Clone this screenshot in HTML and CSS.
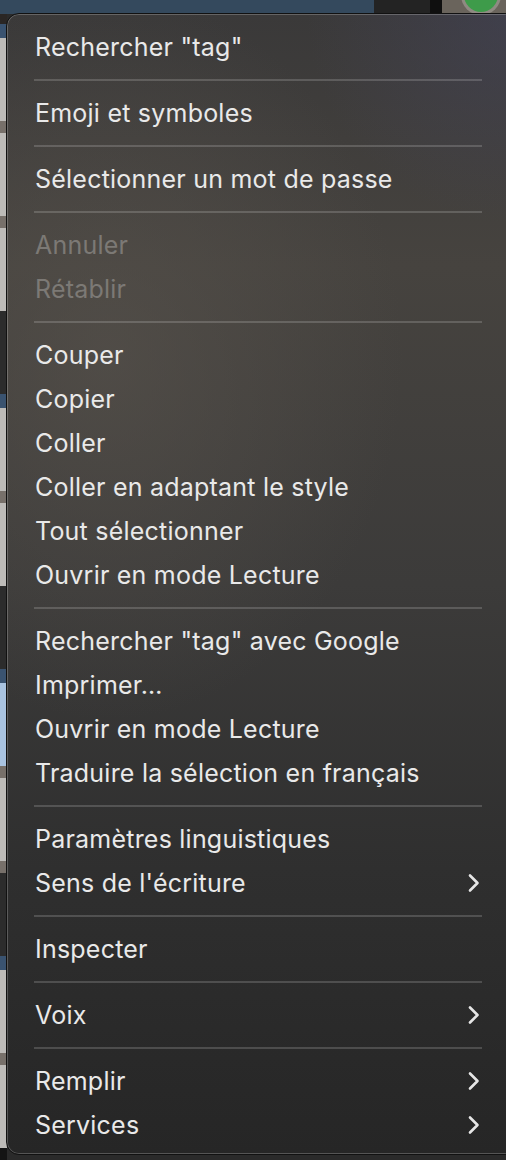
FILE: index.html
```html
<!DOCTYPE html>
<html lang="fr">
<head>
  <meta charset="UTF-8">
  <meta name="viewport" content="width=device-width, initial-scale=1.0">
  <title>Menu contextuel</title>
  <link rel="stylesheet" href="styles.css">
</head>
<body>
  <!-- what is behind the menu -->
  <div class="desk">
    <div class="topbar">
      <div class="tb-blue"></div>
      <div class="tb-dark"></div>
      <div class="tb-black"></div>
      <div class="tb-app"><span class="dot"></span></div>
    </div>
    <div class="under">
      <div class="strip">
        <div class="s-gray"></div>
        <div class="s-blue"></div>
        <div class="s-light"></div>
        <div class="s-brown"></div>
        <div class="s-light"></div>
        <div class="s-brown"></div>
        <div class="s-light"></div>
        <div class="s-dark"></div>
        <div class="s-blue"></div>
        <div class="s-light"></div>
        <div class="s-brown"></div>
        <div class="s-light"></div>
        <div class="s-dark"></div>
        <div class="s-blue"></div>
        <div class="s-pale"></div>
        <div class="s-brown"></div>
        <div class="s-light"></div>
        <div class="s-brown"></div>
        <div class="s-dark"></div>
        <div class="s-blue"></div>
        <div class="s-light"></div>
        <div class="s-brown"></div>
        <div class="s-light"></div>
        <div class="s-black"></div>
      </div>
      <div class="rest"></div>
    </div>
  </div>

  <!-- the context menu -->
  <div class="menu">
    <div class="item">Rechercher "tag"</div>
    <div class="sep"></div>
    <div class="item">Emoji et symboles</div>
    <div class="sep"></div>
    <div class="item">Sélectionner un mot de passe</div>
    <div class="sep"></div>
    <div class="item off">Annuler</div>
    <div class="item off">Rétablir</div>
    <div class="sep"></div>
    <div class="item">Couper</div>
    <div class="item">Copier</div>
    <div class="item">Coller</div>
    <div class="item">Coller en adaptant le style</div>
    <div class="item">Tout sélectionner</div>
    <div class="item">Ouvrir en mode Lecture</div>
    <div class="sep"></div>
    <div class="item">Rechercher "tag" avec Google</div>
    <div class="item">Imprimer…</div>
    <div class="item">Ouvrir en mode Lecture</div>
    <div class="item">Traduire la sélection en français</div>
    <div class="sep"></div>
    <div class="item">Paramètres linguistiques</div>
    <div class="item sub">Sens de l'écriture
      <svg class="chev" viewBox="0 0 12 20"><path d="M2 2.5 L9.5 10 L2 17.5"/></svg>
    </div>
    <div class="sep"></div>
    <div class="item">Inspecter</div>
    <div class="sep"></div>
    <div class="item sub">Voix
      <svg class="chev" viewBox="0 0 12 20"><path d="M2 2.5 L9.5 10 L2 17.5"/></svg>
    </div>
    <div class="sep"></div>
    <div class="item sub">Remplir
      <svg class="chev" viewBox="0 0 12 20"><path d="M2 2.5 L9.5 10 L2 17.5"/></svg>
    </div>
    <div class="item sub">Services
      <svg class="chev" viewBox="0 0 12 20"><path d="M2 2.5 L9.5 10 L2 17.5"/></svg>
    </div>
  </div>
</body>
</html>
```

FILE: styles.css
```css
html, body {
  margin: 0;
  padding: 0;
  height: 100%;
}

body {
  position: relative;
  overflow: hidden;
  background: #1b1b1b;
  font-family: Inter, "Noto Sans", sans-serif;
}

.desk {
  display: flex;
  flex-direction: column;
  height: 100%;
}

.topbar {
  display: flex;
  height: 14px;
}

.tb-blue { width: 374px; background: #34495d; }
.tb-dark { width: 56px; background: #232323; }
.tb-black { width: 12px; background: #0f0f0f; }

.tb-app {
  flex: 1;
  background: #6a645c;
  position: relative;
}

.tb-app .dot {
  position: absolute;
  left: 22px;
  top: -22px;
  width: 34px;
  height: 34px;
  border-radius: 50%;
  background: #3e9b4a;
  box-shadow: 0 0 0 3px #8f8a82;
}

.under {
  flex: 1;
  display: flex;
}

.strip {
  width: 7px;
  display: flex;
  flex-direction: column;
}

.strip div { flex: 1; }
.s-gray { background: #2a2624; flex: 0 0 10px !important; }
.s-blue { background: #3a5370; flex: 0 0 14px !important; }
.s-light { background: #bdbbb8; }
.s-pale { background: #a9c3e0; }
.s-brown { background: #77706a; flex: 0 0 12px !important; }
.s-dark { background: #2c2c2c; }
.s-black { background: #141414; flex: 0 0 12px !important; }

.rest {
  flex: 1;
  background: #2a2a2a;
}

/* menu lies over the page */
.menu {
  position: absolute;
  left: 6px;
  top: 13px;
  width: 512px;
  box-sizing: border-box;
  padding: 11px 0 7px;
  border-radius: 13px;
  border: 1px solid #111;
  box-shadow: inset 0 0 0 1px rgba(255, 255, 255, 0.22);
  background:
    radial-gradient(ellipse 420px 520px at 20% 30%, rgba(88, 83, 77, 0.6), rgba(88, 83, 77, 0) 70%),
    radial-gradient(ellipse 300px 300px at 100% 0%, rgba(70, 70, 95, 0.5), rgba(70, 70, 95, 0) 70%),
    linear-gradient(180deg, #3a3939 0%, #46433f 22%, #3c3b3a 50%, #2f2f2f 75%, #262626 100%);
  color: #e9e9e9;
}

.item {
  display: flex;
  align-items: center;
  justify-content: space-between;
  height: 44px;
  padding: 0 26px 0 28px;
  font-size: 25px;
  line-height: 44px;
  letter-spacing: 0.22px;
  white-space: nowrap;
}

.item.off {
  color: #7c7975;
}

.sep {
  height: 2px;
  margin: 10px 35px 10px 27px;
  background: rgba(255, 255, 255, 0.17);
}

.chev {
  width: 12px;
  height: 20px;
  margin-right: 11px;
  fill: none;
  stroke: #e6e6e6;
  stroke-width: 2.6;
  stroke-linecap: round;
  stroke-linejoin: round;
}
```
